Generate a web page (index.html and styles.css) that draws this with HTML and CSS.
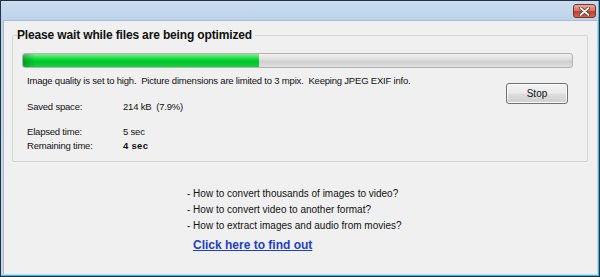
FILE: index.html
```html
<!DOCTYPE html>
<html lang="en">
  <head>
    <meta charset="UTF-8" />
    <title>Optimizing files</title>
    <link rel="stylesheet" href="styles.css">
  </head>
  <body>
    <div class="window">
      <div class="titlebar">
        <button class="close" type="button" aria-label="Close">
          <svg width="11" height="9" viewBox="0 0 11 9">
            <path d="M1.5 1 L9.5 8 M9.5 1 L1.5 8" stroke="#5a1c17" stroke-width="3.2" stroke-linecap="round" />
            <path d="M1.5 1 L9.5 8 M9.5 1 L1.5 8" stroke="#ffffff" stroke-width="1.8" stroke-linecap="round" />
          </svg>
        </button>
      </div>
      <div class="client">
        <fieldset class="group">
          <legend>Please wait while files are being optimized</legend>
          <div class="progress">
            <div class="progress-fill" style="width: 43%"></div>
          </div>
          <div class="status">
            <div class="details">
              <p class="info">Image quality is set to high.&nbsp; Picture dimensions are limited to 3 mpix.&nbsp; Keeping JPEG EXIF info.</p>
              <div class="row saved">
                <span class="label">Saved space:</span>
                <span class="value">214 kB&nbsp; (7.9%)</span>
              </div>
              <div class="row spaced">
                <span class="label">Elapsed time:</span>
                <span class="value">5 sec</span>
              </div>
              <div class="row">
                <span class="label">Remaining time:</span>
                <span class="value strong">4 sec</span>
              </div>
            </div>
            <button class="btn" type="button">Stop</button>
          </div>
        </fieldset>
        <div class="tips">
          <ul>
            <li>- How to convert thousands of images to video?</li>
            <li>- How to convert video to another format?</li>
            <li>- How to extract images and audio from movies?</li>
          </ul>
          <a href="#" class="more">Click here to find out</a>
        </div>
      </div>
    </div>
  </body>
</html>
```

FILE: styles.css
```css
body {
  margin: 0;
  background-color: #1e2b38;
  font-family: "Liberation Sans", Arial, sans-serif;
  color: #111;
}
.window {
  width: 600px;
  height: 277px;
  box-sizing: border-box;
  border: 1px solid #24313e;
  padding: 0 2px 2px 2px;
  background: linear-gradient(to bottom, #c9dcf0, #bcd2ea 8%, #c4d8ed);
  box-shadow: inset -1px -1px 0 #3bbfe0;
  display: flex;
  flex-direction: column;
}
.titlebar {
  height: 19px;
  display: flex;
  justify-content: flex-end;
  align-items: flex-start;
}
.close {
  width: 23px;
  height: 14px;
  margin: 3px 1px 0 0;
  padding: 0;
  border: 1px solid #7a3229;
  border-radius: 3px;
  background: linear-gradient(to bottom, #e9a99c, #d77767 45%, #c2402f 55%, #d2624e);
  display: flex;
  align-items: center;
  justify-content: center;
}
.client {
  flex: 1;
  background-color: #f0f0f0;
  border-top: 1px solid #a9bcd0;
  border-left: 1px solid #a9bcd0;
  display: flex;
  flex-direction: column;
}
.group {
  margin: 7px 9px 0 8px;
  padding: 0 4px 8px 4px;
  border: 1px solid #d5d5d5;
  border-radius: 2px;
  min-width: 0;
}
.group legend {
  padding: 0 3px 0 0;
  font-size: 12px;
  line-height: 14px;
  font-weight: bold;
  letter-spacing: -0.15px;
  color: #111;
}
.progress {
  height: 15px;
  box-sizing: border-box;
  margin: 11px 10px 0 5px;
  border: 1px solid #b2b2b2;
  border-radius: 3px;
  background: linear-gradient(to bottom, #f2f2f2, #dcdcdc 45%, #cfcfcf 55%, #dedede);
  overflow: hidden;
}
.progress-fill {
  height: 100%;
  background:
    linear-gradient(to right, rgba(0, 80, 20, 0.35), rgba(0, 80, 20, 0) 12px),
    linear-gradient(to bottom, #7ff08f, #10d73a 40%, #00c42a 60%, #16d23c);
}
.status {
  display: flex;
  align-items: flex-start;
  margin-top: 6px;
  padding-left: 10px;
}
.details {
  flex: 1;
  font-size: 9.5px;
  line-height: 14px;
  letter-spacing: -0.2px;
}
.info {
  margin: 0;
}
.row {
  display: flex;
}
.row.saved {
  margin-top: 12px;
}
.row.spaced {
  margin-top: 11px;
}
.label {
  width: 96px;
}
.value.strong {
  font-weight: bold;
  letter-spacing: 0.3px;
}
.btn {
  width: 62px;
  height: 21px;
  margin: 9px 15px 0 0;
  padding: 0;
  border: 1px solid #707070;
  border-radius: 3px;
  background: linear-gradient(to bottom, #f2f2f2, #ebebeb 45%, #dddddd 55%, #cfcfcf);
  box-shadow: inset 0 0 0 1px #fcfcfc;
  font-family: "Liberation Sans", Arial, sans-serif;
  font-size: 10px;
  color: #111;
}
.tips {
  margin: 24px 0 0 183px;
}
.tips ul {
  list-style: none;
  margin: 0;
  padding: 0;
  font-size: 10px;
  line-height: 16px;
}
.more {
  display: inline-block;
  margin: 3px 0 0 6px;
  font-size: 12px;
  line-height: 16px;
  font-weight: bold;
  color: #1d3fc6;
}
```
